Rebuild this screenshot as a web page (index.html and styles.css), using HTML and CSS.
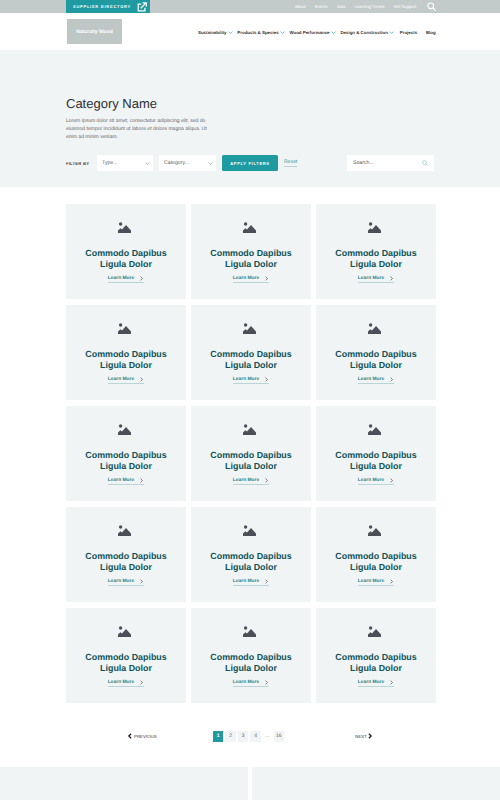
FILE: index.html

```html
<!DOCTYPE html>
<html lang="en">
<head>
    <meta charset="UTF-8">
    <meta name="viewport" content="width=device-width, initial-scale=1.0">
    <title>Category Name</title>
    <link rel="stylesheet" href="styles.css">
</head>
<body>
    <svg width="0" height="0" class="defs">
        <symbol id="picture" viewBox="0 0 13 11">
            <circle cx="2.6" cy="2" r="1.7"></circle>
            <path d="M0 11V8.6L2.4 6.2 4 7.6 8 3l5 5.4V11z"></path>
        </symbol>
        <symbol id="chevron" viewBox="0 0 8 8">
            <path d="M2.5 1l3 3-3 3" fill="none" stroke="currentColor" stroke-width="1"></path>
        </symbol>
        <symbol id="chevron-bold" viewBox="0 0 8 8">
            <path d="M2.5 1l3 3-3 3" fill="none" stroke="currentColor" stroke-width="1.8"></path>
        </symbol>
        <symbol id="caret" viewBox="0 0 8 8">
            <path d="M1 2.5l3 3 3-3" fill="none" stroke="currentColor" stroke-width="1"></path>
        </symbol>
        <symbol id="search" viewBox="0 0 12 12">
            <circle cx="5" cy="5" r="3.8" fill="none" stroke="currentColor" stroke-width="1.4"></circle>
            <path d="M8 8l3.4 3.4" fill="none" stroke="currentColor" stroke-width="1.6"></path>
        </symbol>
    </svg>

    <div class="topbar">
        <a class="supplier-tab" href="#">
            <span>SUPPLIER DIRECTORY</span>
            <svg class="external-icon" viewBox="0 0 12 12">
                <path d="M9.5 7v3.5h-8v-8H5" fill="none" stroke="currentColor" stroke-width="1.5"></path>
                <path d="M4.5 7.5L10 2M6.8 1h4.4v4.4" fill="none" stroke="currentColor" stroke-width="1.5"></path>
            </svg>
        </a>
        <nav class="top-links">
            <a href="#">About</a>
            <a href="#">Events</a>
            <a href="#">Jobs</a>
            <a href="#">Learning Centre</a>
            <a href="#">Get Support</a>
        </nav>
        <svg class="top-search"><use href="#search"></use></svg>
    </div>

    <header class="site-header">
        <div class="logo">Naturally Wood</div>
        <nav class="main-nav">
            <a href="#">Sustainability<svg class="caret"><use href="#caret"></use></svg></a>
            <a href="#">Products &amp; Species<svg class="caret"><use href="#caret"></use></svg></a>
            <a href="#">Wood Performance<svg class="caret"><use href="#caret"></use></svg></a>
            <a href="#">Design &amp; Construction<svg class="caret"><use href="#caret"></use></svg></a>
            <a href="#">Projects</a>
            <a href="#">Blog</a>
        </nav>
    </header>

    <section class="hero">
        <h1>Category Name</h1>
        <p>Lorem ipsum dolor sit amet, consectetur adipiscing elit, sed do eiusmod tempor incididunt ut labore et dolore magna aliqua. Ut enim ad minim veniam.</p>
        <div class="filters">
            <span class="filter-label">FILTER BY</span>
            <div class="select select-type">Type...<svg class="caret"><use href="#caret"></use></svg></div>
            <div class="select select-category">Category...<svg class="caret"><use href="#caret"></use></svg></div>
            <button class="btn-apply">APPLY FILTERS</button>
            <a class="reset" href="#">Reset</a>
            <div class="search-box">Search...<svg class="search-icon"><use href="#search"></use></svg></div>
        </div>
    </section>

    <main class="card-grid" id="cardGrid">
        <article class="card"><svg class="card-icon"><use href="#picture"></use></svg><h3>Commodo Dapibus<br>Ligula Dolor</h3><a class="learn-more" href="#">Learn More<svg class="chevron"><use href="#chevron"></use></svg></a></article>
        <article class="card"><svg class="card-icon"><use href="#picture"></use></svg><h3>Commodo Dapibus<br>Ligula Dolor</h3><a class="learn-more" href="#">Learn More<svg class="chevron"><use href="#chevron"></use></svg></a></article>
        <article class="card"><svg class="card-icon"><use href="#picture"></use></svg><h3>Commodo Dapibus<br>Ligula Dolor</h3><a class="learn-more" href="#">Learn More<svg class="chevron"><use href="#chevron"></use></svg></a></article>
        <article class="card"><svg class="card-icon"><use href="#picture"></use></svg><h3>Commodo Dapibus<br>Ligula Dolor</h3><a class="learn-more" href="#">Learn More<svg class="chevron"><use href="#chevron"></use></svg></a></article>
        <article class="card"><svg class="card-icon"><use href="#picture"></use></svg><h3>Commodo Dapibus<br>Ligula Dolor</h3><a class="learn-more" href="#">Learn More<svg class="chevron"><use href="#chevron"></use></svg></a></article>
        <article class="card"><svg class="card-icon"><use href="#picture"></use></svg><h3>Commodo Dapibus<br>Ligula Dolor</h3><a class="learn-more" href="#">Learn More<svg class="chevron"><use href="#chevron"></use></svg></a></article>
        <article class="card"><svg class="card-icon"><use href="#picture"></use></svg><h3>Commodo Dapibus<br>Ligula Dolor</h3><a class="learn-more" href="#">Learn More<svg class="chevron"><use href="#chevron"></use></svg></a></article>
        <article class="card"><svg class="card-icon"><use href="#picture"></use></svg><h3>Commodo Dapibus<br>Ligula Dolor</h3><a class="learn-more" href="#">Learn More<svg class="chevron"><use href="#chevron"></use></svg></a></article>
        <article class="card"><svg class="card-icon"><use href="#picture"></use></svg><h3>Commodo Dapibus<br>Ligula Dolor</h3><a class="learn-more" href="#">Learn More<svg class="chevron"><use href="#chevron"></use></svg></a></article>
        <article class="card"><svg class="card-icon"><use href="#picture"></use></svg><h3>Commodo Dapibus<br>Ligula Dolor</h3><a class="learn-more" href="#">Learn More<svg class="chevron"><use href="#chevron"></use></svg></a></article>
        <article class="card"><svg class="card-icon"><use href="#picture"></use></svg><h3>Commodo Dapibus<br>Ligula Dolor</h3><a class="learn-more" href="#">Learn More<svg class="chevron"><use href="#chevron"></use></svg></a></article>
        <article class="card"><svg class="card-icon"><use href="#picture"></use></svg><h3>Commodo Dapibus<br>Ligula Dolor</h3><a class="learn-more" href="#">Learn More<svg class="chevron"><use href="#chevron"></use></svg></a></article>
        <article class="card"><svg class="card-icon"><use href="#picture"></use></svg><h3>Commodo Dapibus<br>Ligula Dolor</h3><a class="learn-more" href="#">Learn More<svg class="chevron"><use href="#chevron"></use></svg></a></article>
        <article class="card"><svg class="card-icon"><use href="#picture"></use></svg><h3>Commodo Dapibus<br>Ligula Dolor</h3><a class="learn-more" href="#">Learn More<svg class="chevron"><use href="#chevron"></use></svg></a></article>
        <article class="card"><svg class="card-icon"><use href="#picture"></use></svg><h3>Commodo Dapibus<br>Ligula Dolor</h3><a class="learn-more" href="#">Learn More<svg class="chevron"><use href="#chevron"></use></svg></a></article>
    </main>

    <nav class="pagination">
        <a class="page-step" href="#"><svg class="step-icon flip"><use href="#chevron-bold"></use></svg>PREVIOUS</a>
        <div class="pages">
            <a class="page active" href="#">1</a>
            <a class="page" href="#">2</a>
            <a class="page" href="#">3</a>
            <a class="page" href="#">4</a>
            <span class="dots">....</span>
            <a class="page" href="#">16</a>
        </div>
        <a class="page-step" href="#">NEXT<svg class="step-icon"><use href="#chevron-bold"></use></svg></a>
    </nav>

    <footer class="promo">
        <div class="promo-block"></div>
        <div class="promo-block"></div>
    </footer>
</body>
</html>
```

FILE: styles.css

```css
html, body {
    margin: 0;
    padding: 0;
    height: 800px;
    overflow: hidden;
    background: white;
}
body {
    font-family: 'Liberation Sans', Arial, sans-serif;
    color: #333;
    text-rendering: geometricPrecision;
}
a {
    color: inherit;
    text-decoration: none;
}
.defs {
    position: absolute;
}

.topbar {
    height: 13px;
    background: #c3cbca;
    display: flex;
    align-items: center;
    padding-left: 66px;
}
.supplier-tab {
    width: 84px;
    height: 13px;
    background: #1f9aa0;
    color: white;
    display: flex;
    align-items: center;
    box-sizing: border-box;
    padding-left: 7px;
    font-size: 4px;
    font-weight: bold;
    letter-spacing: 0.75px;
    white-space: nowrap;
}
.external-icon {
    width: 10px;
    height: 10px;
    margin-left: 6px;
}
.top-links {
    display: flex;
    gap: 9px;
    margin-left: 145px;
    font-size: 4.2px;
    color: white;
    white-space: nowrap;
}
.top-search {
    width: 9px;
    height: 9px;
    margin-left: 11px;
    color: white;
}

.site-header {
    height: 37px;
    display: flex;
    align-items: center;
    padding-left: 67px;
    box-sizing: border-box;
}
.logo {
    width: 55px;
    height: 25px;
    background: #bec6c6;
    color: white;
    font-size: 5px;
    font-weight: bold;
    display: flex;
    align-items: center;
    justify-content: center;
}
.main-nav {
    display: flex;
    margin-left: 76px;
    padding-top: 2px;
    gap: 4.8px;
    font-size: 4.4px;
    font-weight: bold;
    color: #333;
    white-space: nowrap;
}
.main-nav a {
    display: flex;
    align-items: center;
}
.main-nav a:nth-child(5) {
    margin-left: 1px;
}
.main-nav a:nth-child(6) {
    margin-left: 4px;
}
.caret {
    width: 5px;
    height: 5px;
    margin-left: 1px;
    color: #1f9aa0;
}

.hero {
    height: 137px;
    background: #f1f4f5;
    box-sizing: border-box;
    padding: 47px 66px 0;
}
.hero h1 {
    margin: 0;
    font-size: 13px;
    line-height: 14px;
    font-weight: normal;
    color: #2b2f33;
}
.hero p {
    margin: 7px 0 0;
    width: 145px;
    font-size: 5.05px;
    line-height: 7.8px;
    color: #666;
}
.filters {
    display: flex;
    align-items: center;
    margin-top: 14px;
    height: 16px;
}
.filter-label {
    width: 31px;
    font-size: 4.2px;
    font-weight: bold;
    letter-spacing: 0.2px;
    color: #444;
}
.select {
    height: 16px;
    background: white;
    box-sizing: border-box;
    padding: 0 3px 0 5px;
    display: flex;
    align-items: center;
    justify-content: space-between;
    font-size: 5.2px;
    color: #666;
}
.select .caret {
    color: #888;
}
.select-type {
    width: 56px;
    margin-right: 6px;
}
.select-category {
    width: 57px;
    margin-right: 6px;
}
.btn-apply {
    width: 56px;
    height: 16px;
    padding: 0;
    border: none;
    border-radius: 1.5px;
    background: #1f9aa0;
    color: white;
    font-family: inherit;
    font-size: 4px;
    font-weight: bold;
    letter-spacing: 0.7px;
}
.reset {
    margin-left: 6px;
    font-size: 5px;
    color: #1f9aa0;
    border-bottom: 1px solid #b9cfd2;
    padding-bottom: 1px;
}
.search-box {
    margin-left: auto;
    width: 87px;
    height: 16px;
    background: white;
    box-sizing: border-box;
    padding: 0 6px;
    display: flex;
    align-items: center;
    justify-content: space-between;
    font-size: 5.2px;
    color: #555;
}
.search-icon {
    width: 6px;
    height: 6px;
    color: #8fc3c6;
}

.card-grid {
    display: grid;
    grid-template-columns: repeat(3, 120px);
    grid-auto-rows: 95px;
    column-gap: 5px;
    row-gap: 6px;
    padding: 17px 0 0 66px;
}
.card {
    background: #f1f4f5;
    display: flex;
    flex-direction: column;
    align-items: center;
    box-sizing: border-box;
    padding-top: 18px;
}
.card-icon {
    width: 13px;
    height: 11px;
    margin-right: 3px;
    fill: #4c4f57;
}
.card h3 {
    margin: 15px 0 0;
    font-size: 8.9px;
    line-height: 11px;
    font-weight: bold;
    text-align: center;
    color: #0f5358;
}
.learn-more {
    margin-top: 6px;
    display: flex;
    align-items: center;
    font-size: 4.9px;
    font-weight: bold;
    color: #1f8288;
    border-bottom: 1px solid #b9d5d7;
    padding-bottom: 1px;
}
.chevron {
    width: 5px;
    height: 5px;
    margin-left: 5px;
    color: #333;
}

.pagination {
    height: 64px;
    display: flex;
    align-items: center;
    justify-content: space-between;
    box-sizing: border-box;
    padding: 2px 127px 0;
}
.page-step {
    display: flex;
    align-items: center;
    font-size: 4.4px;
    color: #333;
}
.step-icon {
    width: 6px;
    height: 6px;
    color: #222;
}
.flip {
    transform: scaleX(-1);
    margin-right: 1px;
}
.pages {
    display: flex;
    align-items: center;
    gap: 2px;
    margin-left: -15px;
}
.page {
    min-width: 10.5px;
    height: 11px;
    box-sizing: border-box;
    background: #f1f4f5;
    display: flex;
    align-items: center;
    justify-content: center;
    font-size: 5px;
    color: #555;
}
.page.active {
    background: #1f9aa0;
    color: white;
    font-weight: bold;
}
.dots {
    font-size: 5px;
    color: #888;
    margin: 0 1.5px;
}

.promo {
    display: flex;
    justify-content: space-between;
}
.promo-block {
    width: 248px;
    height: 33px;
    background: #f1f4f5;
}
```
